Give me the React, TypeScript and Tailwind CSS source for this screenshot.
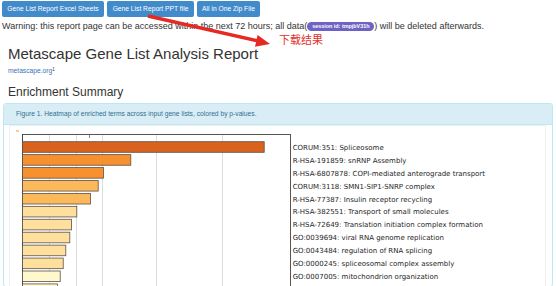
import React from "react";

const bars = [
  { w: 241.7, c: "#d9621f" },
  { w: 108.3, c: "#f7902f" },
  { w: 81, c: "#f7902f" },
  { w: 75.7, c: "#fcb95b" },
  { w: 68, c: "#fcb95b" },
  { w: 54.3, c: "#fee09c" },
  { w: 49, c: "#fee09c" },
  { w: 47.3, c: "#fee09c" },
  { w: 43.3, c: "#fee09c" },
  { w: 40.7, c: "#fee09c" },
  { w: 37.7, c: "#fff8cc" },
  { w: 35, c: "#fff8cc" },
];

const labels = [
  "CORUM:351: Spliceosome",
  "R-HSA-191859: snRNP Assembly",
  "R-HSA-6807878: COPI-mediated anterograde transport",
  "CORUM:3118: SMN1-SIP1-SNRP complex",
  "R-HSA-77387: Insulin receptor recycling",
  "R-HSA-382551: Transport of small molecules",
  "R-HSA-72649: Translation initiation complex formation",
  "GO:0039694: viral RNA genome replication",
  "GO:0043484: regulation of RNA splicing",
  "GO:0000245: spliceosomal complex assembly",
  "GO:0007005: mitochondrion organization",
];

function Chart() {
  const pitch = 12.93;
  return (
    <svg width="548" height="161" viewBox="0 0 548 161" className="block">
      <rect x="5.5" y="0.5" width="536" height="200" fill="none" stroke="#efefef" />
      <rect x="12" y="5" width="3" height="2" fill="#f6cf9e" />
      {[45.5, 72.5, 98.5, 152.5, 218.5].map((x) => (
        <line key={x} x1={x} y1="9" x2={x} y2="161" stroke="#dcdcdc" strokeWidth="1" />
      ))}
      <line x1="85.5" y1="9" x2="85.5" y2="13" stroke="#888" strokeWidth="1" />
      <line x1="18" y1="9.5" x2="287" y2="9.5" stroke="#555" strokeWidth="1" />
      <line x1="18.5" y1="9" x2="18.5" y2="161" stroke="#444" strokeWidth="1" />
      <line x1="286.5" y1="9" x2="286.5" y2="161" stroke="#555" strokeWidth="1" />
      {bars.map((b, i) => (
        <rect
          key={i}
          x="18.5"
          y={16.7 + i * pitch}
          width={b.w}
          height="10.6"
          fill={b.c}
          stroke="#5c5149"
          strokeWidth="0.8"
        />
      ))}
      {labels.map((t, i) => (
        <text
          key={t}
          x="288.7"
          y={24.8 + i * pitch}
          fontFamily="'DejaVu Sans', sans-serif"
          fontSize="7"
          fill="#262626"
        >
          {t}
        </text>
      ))}
    </svg>
  );
}

export default function App() {
  return (
    <div
      className="relative w-[556px] h-[286px] overflow-hidden bg-white text-[#333]"
      style={{ fontFamily: "'Liberation Sans', Arial, sans-serif" }}
    >
      <div className="flex gap-[3px] pl-[2px] pt-[1px]">
        <button className="h-[16px] w-[102px] rounded-[2px] bg-[#428bca] text-[6.7px] leading-[16px] text-white">
          Gene List Report Excel Sheets
        </button>
        <button className="h-[16px] w-[87px] rounded-[2px] bg-[#428bca] text-[6.7px] leading-[16px] text-white">
          Gene List Report PPT file
        </button>
        <button className="h-[16px] w-[63px] rounded-[2px] bg-[#428bca] text-[6.7px] leading-[16px] text-white">
          All in One Zip File
        </button>
      </div>
      <div className="mt-[4px] pl-[2px] text-[9px] leading-[11px] whitespace-nowrap flex items-center">
        <span>Warning: this report page can be accessed within the next 72 hours; all data(</span>
        <span className="inline-block h-[9px] w-[67px] rounded-full bg-[#6e63c4] text-center text-[5.4px] font-bold leading-[9px] text-white">
          session id: tmpjbV31h
        </span>
        <span>) will be deleted afterwards.</span>
      </div>
      <h1 className="mt-[13px] pl-[8px] text-[15px] leading-[17px] font-normal text-[#333]">
        Metascape Gene List Analysis Report
      </h1>
      <div className="mt-[4px] pl-[8px] text-[6.7px] leading-[9px] text-[#3a73b3]">
        metascape.org<sup className="text-[4.5px] text-[#333]">1</sup>
      </div>
      <h3 className="mt-[10px] pl-[8px] text-[12px] leading-[14px] font-normal text-[#333]">
        Enrichment Summary
      </h3>
      <div className="mt-[4px] ml-[3px] w-[550px] rounded-[3px] border border-[#bce8f1]">
        <div className="h-[21px] border-b border-[#bce8f1] bg-[#d9edf7] pl-[12px] text-[6.7px] leading-[20px] text-[#31708f]">
          Figure 1. Heatmap of enriched terms across input gene lists, colored by p-values.
        </div>
        <Chart />
      </div>

      <svg className="pointer-events-none absolute left-0 top-0" width="556" height="286">
        <line x1="148" y1="16" x2="257" y2="40.7" stroke="#e42a22" strokeWidth="3.4" />
        <polygon points="270,44 255,46.8 257.6,35" fill="#e42a22" />
      </svg>
      <div
        className="absolute left-[279px] top-[33px] text-[11px] leading-[12px] text-[#e3322b]"
        style={{ fontFamily: "'Noto Sans CJK SC', sans-serif" }}
      >
        下载结果
      </div>
    </div>
  );
}
